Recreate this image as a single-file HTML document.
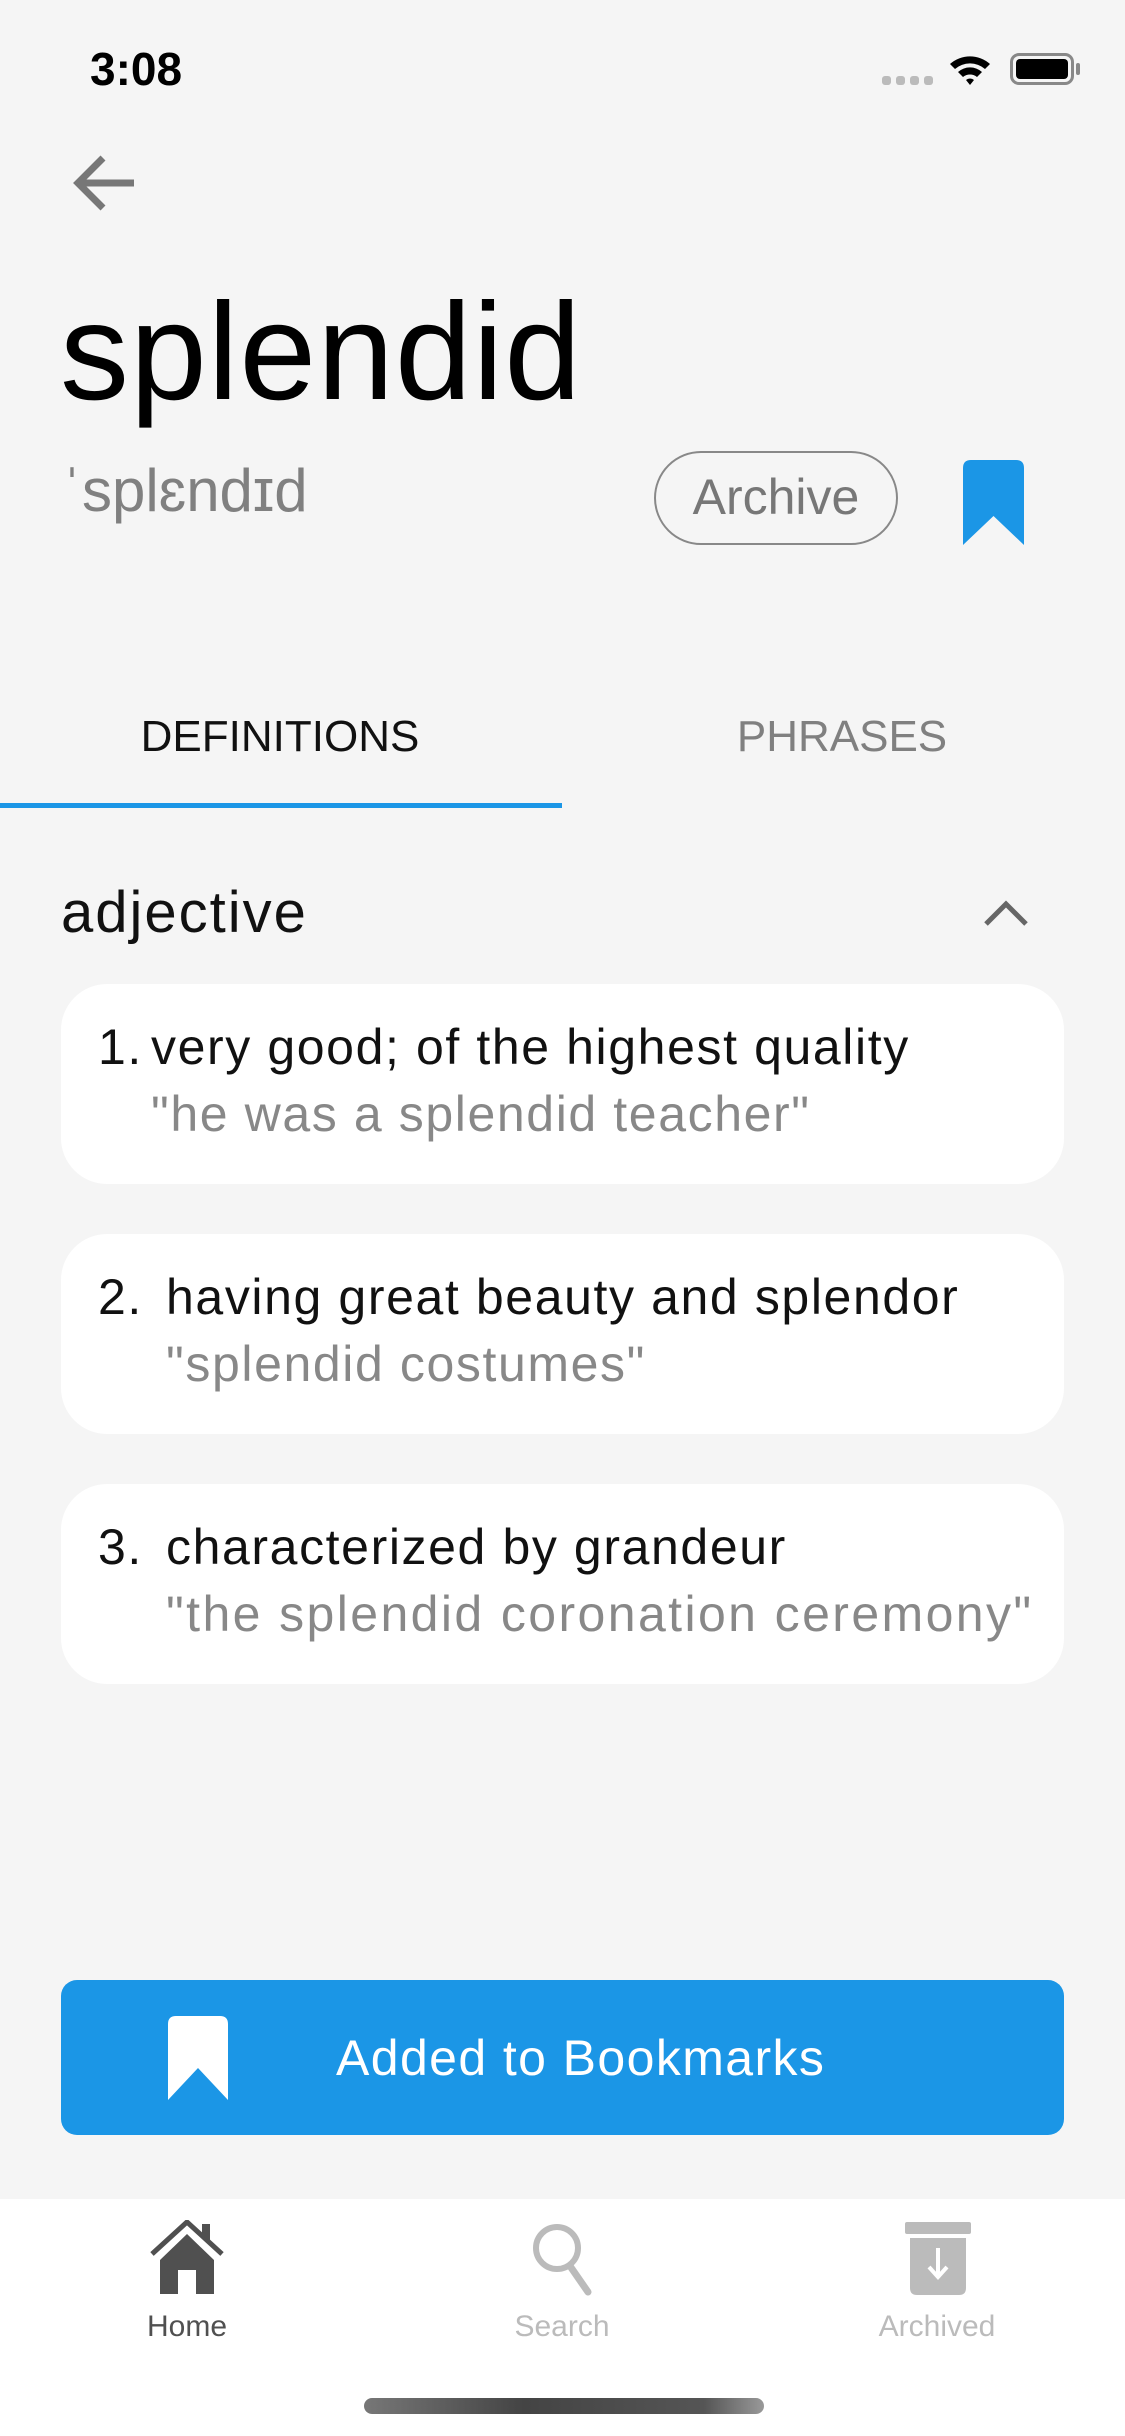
<!DOCTYPE html>
<html><head><meta charset="utf-8"><style>
*{margin:0;padding:0;box-sizing:border-box}
body{width:1125px;height:2436px;background:#f5f5f5;font-family:"Liberation Sans",sans-serif;position:relative;overflow:hidden}
.a{position:absolute;white-space:nowrap}
.card{position:absolute;left:61px;width:1003px;height:200px;background:#fff;border-radius:46px}
.l1{position:absolute;top:34px;font-size:50px;color:#111;letter-spacing:1.6px}
.l2{position:absolute;top:101px;font-size:50px;color:#888;letter-spacing:1.6px}
</style></head><body>
<div class="a" style="left:90px;top:42px;font-size:46px;font-weight:bold;color:#000">3:08</div>
<div class="a" style="left:882px;top:76px;display:flex;gap:5px"><span style="width:9px;height:9px;border-radius:3px;background:#bbb"></span><span style="width:9px;height:9px;border-radius:3px;background:#bbb"></span><span style="width:9px;height:9px;border-radius:3px;background:#bbb"></span><span style="width:9px;height:9px;border-radius:3px;background:#bbb"></span></div>
<svg class="a" style="left:948px;top:52px" width="44" height="36" viewBox="0 0 44 36"><path d="M2 12 A30 30 0 0 1 42 12 L37 17 A23 23 0 0 0 7 17Z M10 20 A18 18 0 0 1 34 20 L29 25 A11 11 0 0 0 15 25Z M18 28 A6 6 0 0 1 26 28 L22 33Z" fill="#000"/></svg>
<div class="a" style="left:1010px;top:53px;width:64px;height:32px;border:3px solid #888;border-radius:9px;padding:3px"><div style="width:100%;height:100%;background:#000;border-radius:4px"></div></div>
<div class="a" style="left:1076px;top:63px;width:4px;height:12px;background:#888;border-radius:2px"></div>
<svg class="a" style="left:70px;top:152px" width="70" height="62" viewBox="0 0 70 62"><path d="M64 31 H10 M33 6 L8 31 L33 56" stroke="#777" stroke-width="7" fill="none"/></svg>
<div class="a" style="left:60px;top:283px;font-size:138px;color:#000;line-height:1;letter-spacing:1px">splendid</div>
<div class="a" style="left:62px;top:456px;font-size:60px;color:#808080">ˈsplɛndɪd</div>
<div class="a" style="left:654px;top:451px;width:244px;height:94px;border:2.5px solid #888;border-radius:47px;font-size:50px;color:#777;text-align:center;line-height:88px">Archive</div>
<svg class="a" style="left:963px;top:460px" width="61" height="85" viewBox="0 0 61 85"><path d="M0 8 Q0 0 8 0 H53 Q61 0 61 8 V85 L30.5 56 L0 85Z" fill="#1b96e6"/></svg>
<div class="a" style="left:140px;top:712px;width:280px;text-align:center;font-size:44px;color:#111">DEFINITIONS</div>
<div class="a" style="left:702px;top:712px;width:280px;text-align:center;font-size:44px;color:#808080">PHRASES</div>
<div class="a" style="left:0;top:803px;width:562px;height:5px;background:#1b96e6"></div>
<div class="a" style="left:61px;top:879px;font-size:58px;color:#111;letter-spacing:2px">adjective</div>
<svg class="a" style="left:982px;top:898px" width="48" height="30" viewBox="0 0 48 30"><path d="M4 26 L24 6 L44 26" stroke="#666" stroke-width="5" fill="none"/></svg>
<div class="card" style="top:984px"><span class="l1" style="left:37px">1.</span><span class="l1" style="left:90px">very good; of the highest quality</span><span class="l2" style="left:90px">"he was a splendid teacher"</span></div>
<div class="card" style="top:1234px"><span class="l1" style="left:37px">2.</span><span class="l1" style="left:105px">having great beauty and splendor</span><span class="l2" style="left:105px">"splendid costumes"</span></div>
<div class="card" style="top:1484px"><span class="l1" style="left:37px">3.</span><span class="l1" style="left:105px">characterized by grandeur</span><span class="l2" style="left:105px;letter-spacing:2.4px">"the splendid coronation ceremony"</span></div>
<div class="a" style="left:61px;top:1980px;width:1003px;height:155px;background:#1b96e6;border-radius:16px"></div>
<svg class="a" style="left:168px;top:2016px" width="60" height="84" viewBox="0 0 60 84"><path d="M0 8 Q0 0 8 0 H52 Q60 0 60 8 V84 L30 52 L0 84Z" fill="#fff"/></svg>
<div class="a" style="left:336px;top:2029px;font-size:50px;color:#fff;letter-spacing:1.4px">Added to Bookmarks</div>
<div class="a" style="left:0;top:2199px;width:1125px;height:237px;background:#fff"></div>
<svg class="a" style="left:150px;top:2220px" width="74" height="76" viewBox="0 0 74 76"><path d="M2 34 L37 2 L72 34" stroke="#505050" stroke-width="5" fill="none"/><path d="M52 4 H60 V22 L52 15Z" fill="#505050"/><path d="M10 40 L37 14 L64 40 V74 H46 V50 H28 V74 H10Z" fill="#505050"/></svg>
<div class="a" style="left:87px;top:2310px;width:200px;text-align:center;font-size:30px;color:#505050">Home</div>
<svg class="a" style="left:530px;top:2220px" width="70" height="76" viewBox="0 0 70 76"><circle cx="27" cy="28" r="21" stroke="#bbb" stroke-width="6" fill="none"/><path d="M40 46 L58 72" stroke="#bbb" stroke-width="7" stroke-linecap="round"/></svg>
<div class="a" style="left:462px;top:2310px;width:200px;text-align:center;font-size:30px;color:#bbb">Search</div>
<svg class="a" style="left:905px;top:2220px" width="66" height="76" viewBox="0 0 66 76"><rect x="0" y="2" width="66" height="12" rx="2" fill="#bbb"/><path d="M5 18 H61 V68 Q61 75 54 75 H12 Q5 75 5 68Z" fill="#bbb"/><path d="M33 28 V56 M24 47 L33 57 L42 47" stroke="#fff" stroke-width="4" fill="none"/></svg>
<div class="a" style="left:837px;top:2310px;width:200px;text-align:center;font-size:30px;color:#bbb">Archived</div>
<div class="a" style="left:364px;top:2398px;width:400px;height:16px;border-radius:8px;background:linear-gradient(90deg,#777,#444 40%,#555 85%,#999)"></div>
</body></html>
